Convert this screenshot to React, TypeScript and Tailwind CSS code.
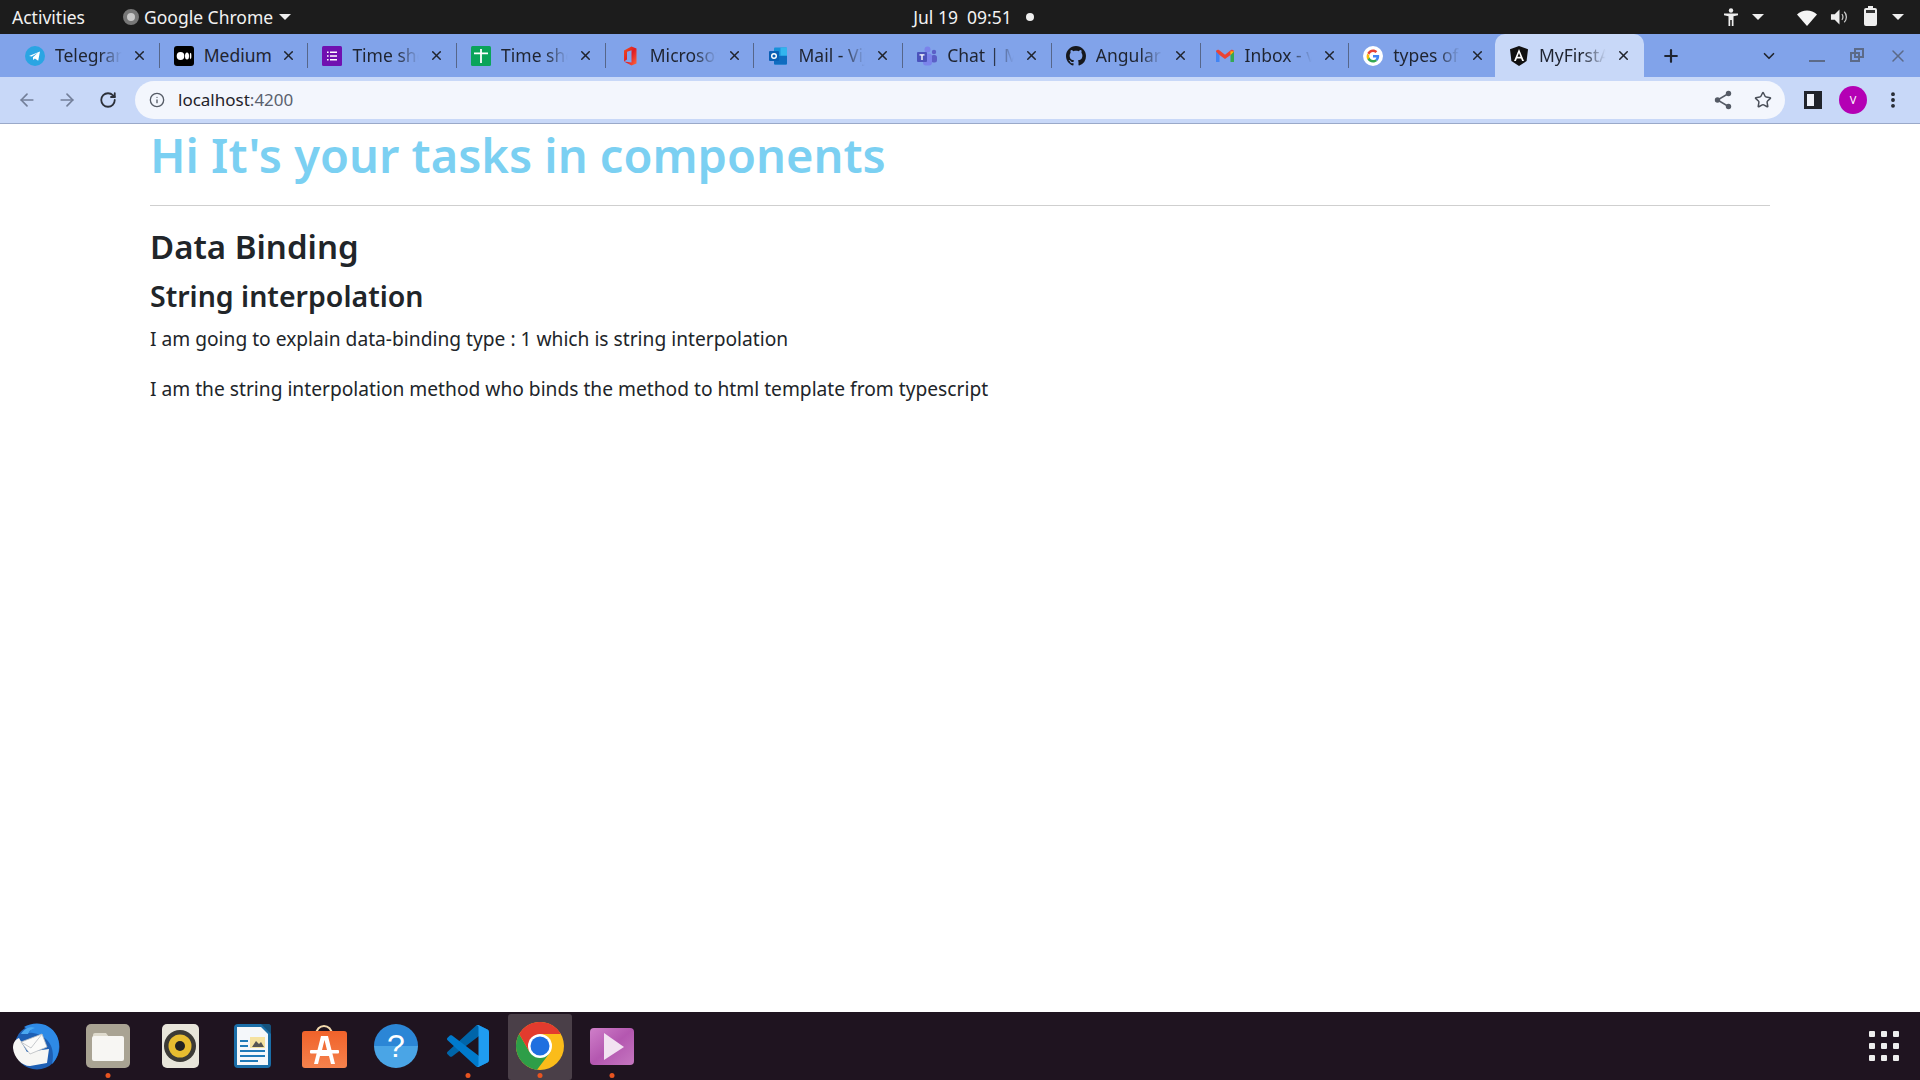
import React from 'react';
import { ArrowLeft, ArrowRight, RotateCw, Info, Star, Plus, X, ChevronDown, EllipsisVertical } from 'lucide-react';

const sans = "font-['Noto_Sans','Open_Sans',sans-serif]";

const TelegramIcon = () => (
  <svg viewBox="0 0 20 20" className="w-5 h-5">
    <circle cx="10" cy="10" r="10" fill="#2aa5e3" />
    <path d="M4 10l11-4.400-1.800 9.200-3.300-2.400-1.700 1.700-.3-2.900 5-4.400-6.200 3.700z" fill="#fff" />
  </svg>
);
const MediumIcon = () => (
  <svg viewBox="0 0 20 20" className="w-5 h-5">
    <rect width="20" height="20" rx="3" fill="#000" />
    <ellipse cx="6.500" cy="10" rx="3.800" ry="3.900" fill="#fff" />
    <ellipse cx="13" cy="10" rx="2" ry="3.600" fill="#fff" />
    <ellipse cx="16.600" cy="10" rx=".8" ry="3.200" fill="#fff" />
  </svg>
);
const FormsIcon = () => (
  <svg viewBox="0 0 20 20" className="w-5 h-5">
    <rect width="20" height="20" rx="1.500" fill="#7010b0" />
    <path d="M5 5.500h1.600v1.600H5zM8 5.500h7v1.600H8zM5 9.200h1.600v1.600H5zM8 9.200h7v1.600H8zM5 12.900h1.600v1.600H5zM8 12.900h7v1.600H8z" fill="#fff" />
  </svg>
);
const SheetsIcon = () => (
  <svg viewBox="0 0 20 20" className="w-5 h-5">
    <rect width="20" height="20" rx="1.500" fill="#0aa45a" />
    <path d="M9.100 3h1.800v3.500H17v1.800h-6.100V17H9.100V8.300H3V6.500h6.100z" fill="#fff" />
  </svg>
);
const OfficeIcon = () => (
  <svg viewBox="0 0 20 20" className="w-5 h-5">
    <defs>
      <linearGradient id="office" x1="0" y1="0" x2="1" y2="1">
        <stop offset="0" stopColor="#f2541b" />
        <stop offset="0.5" stopColor="#e01c24" />
        <stop offset="1" stopColor="#ff6a3c" />
      </linearGradient>
    </defs>
    <path d="M4 4.500L11.500 0.500 16.500 2.500V17.500L11.500 19.500 4 15.500 11.500 16.500V4.200L7 5.800V13.500L4 15.500z" fill="url(#office)" />
  </svg>
);
const OutlookIcon = () => (
  <svg viewBox="0 0 20 20" className="w-5 h-5">
    <rect x="6" y="1.500" width="13" height="17" rx="1" fill="#1690d8" />
    <rect x="12.500" y="1.500" width="6.500" height="8" fill="#32b5ee" />
    <path d="M6 10l13 0v7.500a1 1 0 0 1-1 1H7a1 1 0 0 1-1-1z" fill="#0f6cc0" />
    <rect x="1" y="5" width="10" height="10" rx="1" fill="#0a5fb4" />
    <circle cx="6" cy="10" r="2.300" fill="none" stroke="#fff" strokeWidth="1.400" />
  </svg>
);
const TeamsIcon = () => (
  <svg viewBox="0 0 20 20" className="w-5 h-5">
    <circle cx="17" cy="6" r="2.200" fill="#5b5fc7" />
    <rect x="14" y="9" width="6" height="7.500" rx="2.500" fill="#5b5fc7" />
    <circle cx="10.500" cy="3.500" r="3" fill="#7b83eb" />
    <rect x="6" y="7.500" width="9" height="12" rx="3" fill="#7b83eb" />
    <rect x="0" y="6" width="10" height="10" rx="1" fill="#4b53bc" />
    <path d="M2.500 8.300h5v1.300H5.700v4.300H4.300V9.600H2.500z" fill="#fff" />
  </svg>
);
const GithubIcon = () => (
  <svg viewBox="0 0 16 16" className="w-5 h-5" fill="#16181d">
    <path d="M8 0C3.580 0 0 3.580 0 8c0 3.540 2.290 6.530 5.470 7.590.4.070.55-.17.55-.38 0-.19-.01-.82-.01-1.490-2.010.37-2.530-.49-2.690-.94-.09-.23-.48-.94-.82-1.130-.28-.15-.68-.52-.01-.53.63-.01 1.080.58 1.230.82.720 1.210 1.870.87 2.330.66.070-.52.280-.87.510-1.070-1.780-.2-3.640-.89-3.640-3.950 0-.87.310-1.590.820-2.150-.08-.2-.36-1.020.08-2.120 0 0 .67-.21 2.200.82.640-.18 1.320-.27 2-.27s1.360.09 2 .27c1.530-1.040 2.200-.82 2.200-.82.440 1.100.16 1.920.08 2.120.51.560.82 1.270.82 2.150 0 3.070-1.870 3.750-3.650 3.950.29.250.54.730.54 1.480 0 1.070-.01 1.930-.01 2.200 0 .21.150.46.550.38A8.010 8.010 0 0 0 16 8c0-4.420-3.580-8-8-8z" />
  </svg>
);
const GmailIcon = () => (
  <svg viewBox="0 0 20 20" className="w-5 h-5">
    <path d="M1 5v11h3.500V8.500z" fill="#4285f4" />
    <path d="M19 5v11h-3.500V8.500z" fill="#34a853" />
    <path d="M1 5.500c0-1.500 1.800-2.400 3-1.400l6 4.600 6-4.600c1.200-1 3-.1 3 1.400L15.500 9 10 13 4.500 9z" fill="#ea4335" />
    <path d="M15.500 5.300L19 5.500 15.500 9z" fill="#fbbc04" />
  </svg>
);
const GoogleIcon = () => (
  <svg viewBox="0 0 20 20" className="w-5 h-5">
    <circle cx="10" cy="10" r="10" fill="#fff" />
    <path d="M16.200 10.200c0-.5 0-.9-.1-1.300H10v2.500h3.500c-.1.800-.6 1.500-1.300 2l2 1.600c1.200-1.100 2-2.800 2-4.800z" fill="#4285f4" />
    <path d="M10 16.500c1.700 0 3.200-.6 4.200-1.500l-2-1.600c-.6.400-1.300.6-2.200.6-1.700 0-3.100-1.100-3.600-2.700l-2.100 1.600c1 2.100 3.200 3.600 5.700 3.600z" fill="#34a853" />
    <path d="M6.400 11.800c-.3-.8-.3-1.700 0-2.500L4.300 7.600c-.9 1.800-.9 4 0 5.800z" fill="#fbbc05" />
    <path d="M10 6c.9 0 1.800.3 2.500 1l1.800-1.800C13.100 4.100 11.600 3.500 10 3.500c-2.500 0-4.700 1.500-5.700 3.600l2.100 1.700C6.900 7.200 8.300 6 10 6z" fill="#ea4335" />
  </svg>
);
const AngularIcon = () => (
  <svg viewBox="0 0 20 20" className="w-5 h-5">
    <path d="M10 0l9 3.200-1.400 11.900L10 20l-7.600-4.900L1 3.200z" fill="#111" />
    <path d="M10 3L5 15h1.900l1-2.600h4.200l1 2.600H15zM8.500 10.800L10 7l1.500 3.800z" fill="#fff" />
  </svg>
);

const TABS = [
  { title: 'Telegram', icon: <TelegramIcon /> },
  { title: 'Medium', icon: <MediumIcon />, fits: true },
  { title: 'Time sheet', icon: <FormsIcon /> },
  { title: 'Time sheet', icon: <SheetsIcon /> },
  { title: 'Microsoft', icon: <OfficeIcon /> },
  { title: 'Mail - Vijay', icon: <OutlookIcon /> },
  { title: 'Chat | Microsoft', icon: <TeamsIcon /> },
  { title: 'Angular', icon: <GithubIcon /> },
  { title: 'Inbox - vijay', icon: <GmailIcon /> },
  { title: 'types of', icon: <GoogleIcon /> },
];

function Tab({ title, icon, active, last, fits }: { title: string; icon: React.ReactNode; active?: boolean; last?: boolean; fits?: boolean }) {
  return (
    <div className={`relative flex items-center w-[148.7px] h-full shrink-0 ${active ? 'pl-[14px] bg-[#c8d8f8] rounded-t-[10px]' : 'pl-[17px]'}`}>
      <span className="w-5 h-5 shrink-0">{icon}</span>
      <span className={`ml-[10px] w-[68px] overflow-hidden whitespace-nowrap text-[17.5px] text-[#1f2430] ${fits ? '' : '[mask-image:linear-gradient(to_right,#000_65%,transparent_98%)]'}`}>
        {title}
      </span>
      <X size={15} strokeWidth={2.4} className="ml-[9px] shrink-0 text-[#20242c]" />
      {!active && !last && <span className="absolute -right-[3px] top-[9px] h-[25px] w-px bg-[#56668a]" />}
    </div>
  );
}

const Caret = ({ className }: { className: string }) => (
  <span className={`w-0 h-0 border-x-[6px] border-x-transparent border-t-[6px] border-t-[#eee] ${className}`} />
);

function TopBar() {
  return (
    <div className="flex items-center h-[34px] shrink-0 bg-[#1c1c1c] text-[#f2f2f2] text-[17.5px]">
      <span className="ml-3 w-[77px]">Activities</span>
      <span className="ml-[34px] w-4 h-4 rounded-full bg-[#c8c8c8] border-[4px] border-[#777]" />
      <span className="ml-[5px] w-[131px] whitespace-nowrap">Google Chrome</span>
      <Caret className="ml-[4px]" />
      <div className="flex-1 flex justify-center pr-[67px]">
        <span className="flex items-center">
          Jul 19&nbsp; 09:51
          <span className="ml-[14px] w-2 h-2 rounded-full bg-[#eee]" />
        </span>
      </div>
      <div className="flex items-center pr-[16px]">
        <svg viewBox="0 0 16 18" className="w-4 h-[18px]" fill="#eee">
          <circle cx="8" cy="2.500" r="2.200" />
          <path d="M1 5.500h14v1.800l-4.500 1V18H8.800v-6H7.200v6H5.500V8.300L1 7.300z" />
        </svg>
        <Caret className="ml-[13px]" />
        <svg viewBox="0 0 20 18" className="ml-[33px] w-5 h-[18px]" fill="#f5f5f5">
          <path d="M0 6.500C5.500 1 14.500 1 20 6.500L10 18z" />
        </svg>
        <svg viewBox="0 0 20 18" className="ml-[13px] w-[19px] h-[18px]" fill="none">
          <path d="M1 6h4l5-5v16l-5-5H1z" fill="#eee" />
          <path d="M12.500 6c1.500 1.500 1.500 4.500 0 6M15 3.500c3 3 3 8 0 11" stroke="#ccc" strokeWidth="1.300" />
        </svg>
        <span className="ml-[15px] relative w-[13px] h-[18px] border-2 border-[#eee] rounded-[2px] bg-[#eee]">
          <span className="absolute -top-[4px] left-[2px] w-[5px] h-[2px] bg-[#eee]" />
          <span className="absolute left-0 right-0 top-0 h-[3px] bg-[#333]" />
        </span>
        <Caret className="ml-[15px]" />
      </div>
    </div>
  );
}

function TabStrip() {
  return (
    <div className="flex items-stretch h-[43px] shrink-0 bg-[#81a3ea] pl-2">
      {TABS.map((t, i) => (
        <Tab key={i} title={t.title} icon={t.icon} fits={t.fits} last={i === TABS.length - 1} />
      ))}
      <Tab title="MyFirstApp" icon={<AngularIcon />} active />
      <Plus size={20} strokeWidth={2.6} className="ml-[17px] self-center text-[#1f2430]" />
      <ChevronDown size={18} strokeWidth={2.2} className="ml-[79px] self-center text-[#20242c]" />
      <span className="ml-[31px] mt-[26px] self-start w-[16px] h-[2px] bg-[#5c6a88]" />
      <span className="ml-[25px] self-center relative w-[14px] h-[14px] -mt-[2px]">
        <span className="absolute right-0 top-0 w-[10px] h-[10px] border-2 border-[#5c6a88]" />
        <span className="absolute left-0 bottom-0 w-[10px] h-[10px] border-2 border-[#5c6a88]" />
      </span>
      <X size={20} strokeWidth={1.800} className="ml-[24px] self-center text-[#5c6a88]" />
    </div>
  );
}

function Toolbar() {
  return (
    <div className="flex items-center h-[47px] shrink-0 bg-[#c8d8f8] border-b border-[#9aa9c9]">
      <ArrowLeft size={20} strokeWidth={2} className="ml-[17px] text-[#737f99]" />
      <ArrowRight size={20} strokeWidth={2} className="ml-[20px] text-[#737f99]" />
      <RotateCw size={18} strokeWidth={2.4} className="ml-[22px] text-[#2b2f38]" />
      <div className="ml-[18px] flex items-center w-[1650px] h-[38px] rounded-full bg-[#f3f6fd]">
        <Info size={16} strokeWidth={2} className="ml-[14px] text-[#555b66]" />
        <span className="ml-[13px] text-[17px] text-[#1f2229]">
          localhost<span className="text-[#5a616e]">:4200</span>
        </span>
        <svg viewBox="0 0 18 20" className="ml-auto w-[18px] h-5 text-[#555b66]" fill="currentColor">
          <circle cx="14.500" cy="3.500" r="2.700" />
          <circle cx="3.500" cy="10" r="2.700" />
          <circle cx="14.500" cy="16.500" r="2.700" />
          <path d="M14.500 3.500L3.500 10l11 6.500" fill="none" stroke="currentColor" strokeWidth="1.500" />
        </svg>
        <Star size={18} strokeWidth={2} className="ml-[22px] mr-[13px] text-[#4a4f59]" />
      </div>
      <span className="ml-[19px] w-[18px] h-[18px] border-[3px] border-[#20242c] border-r-[8px] bg-[#eef2fb]" />
      <span className="ml-[17px] flex items-center justify-center w-7 h-7 rounded-full bg-[#b400b4] text-white text-[11px]">V</span>
      <EllipsisVertical size={20} strokeWidth={2.6} className="ml-[16px] text-[#20242c]" />
    </div>
  );
}

function DockSlot({ children, dot, active }: { children: React.ReactNode; dot?: boolean; active?: boolean }) {
  return (
    <div className="relative flex items-center justify-center w-[72px] h-[68px]">
      {active && <span className="absolute left-[4px] right-[4px] top-[2px] bottom-0 bg-[#4a3f48] rounded-[3px]" />}
      <span className="relative flex items-center justify-center">{children}</span>
      {dot && <span className="absolute bottom-[2px] left-1/2 -translate-x-1/2 w-[5px] h-[5px] rounded-full bg-[#e95420]" />}
    </div>
  );
}

function Dock() {
  return (
    <div className="flex items-center h-[68px] shrink-0 bg-[#1f1420]">
      <div className="flex items-center">
        <DockSlot>
          <svg viewBox="0 0 48 48" className="w-12 h-12">
            <circle cx="25" cy="25" r="22.500" fill="#1d5fb4" />
            <path d="M12 5C22-1 38 0 45 14c4 9 2 21-5 28 2-9 1-18-5-24C29 12 22 10 13 11l6-2z" fill="#2e8ae6" />
            <path d="M9 12c3-5 9-8 14-6-4 1-6 3-7 6z" fill="#4aa8f0" />
            <path d="M1 26c0-6 3-9 6-10l8 14 22-3-2 14-17 3C10 44 2 36 1 26z" fill="#f6f6f4" />
            <path d="M9 20l21-8 5 13-17 7z" fill="#fbfbfa" stroke="#b9bcc0" strokeWidth=".8" />
            <path d="M9 20l10 6 11-14" fill="none" stroke="#b9bcc0" strokeWidth=".8" />
          </svg>
        </DockSlot>
        <DockSlot dot>
          <div className="flex items-center justify-center w-[44px] h-[44px] rounded-[5px] bg-[#a9a393]">
            <svg viewBox="0 0 32 30" className="w-8 h-[30px]">
              <path d="M1 4a2 2 0 0 1 2-2h11l3 4H1z" fill="#dfdbce" />
              <rect x="0" y="5" width="32" height="25" rx="2" fill="#f7f6f3" />
            </svg>
          </div>
        </DockSlot>
        <DockSlot>
          <div className="flex items-center justify-center w-[37px] h-[44px] rounded-[5px] bg-[#e8e5da]">
            <svg viewBox="0 0 32 32" className="w-8 h-8">
              <circle cx="16" cy="16" r="16" fill="#3c3a36" />
              <circle cx="16" cy="16" r="11.500" fill="#e8bd30" />
              <circle cx="16" cy="16" r="5" fill="#222" />
            </svg>
          </div>
        </DockSlot>
        <DockSlot>
          <svg viewBox="0 0 37 44" className="w-[37px] h-[44px]">
            <rect width="37" height="44" rx="4" fill="#1a6ea8" />
            <path d="M3 3h24l7 7v31H3z" fill="#f4f7fa" />
            <path d="M27 0h7a3 3 0 0 1 3 3v7z" fill="#14527d" />
            <path d="M6 16h8v2H6zM6 21h8v2H6zM6 26h25v2H6zM6 31h25v2H6zM6 36h18v2H6z" fill="#1f7ab8" />
            <rect x="16" y="13" width="15" height="11" fill="#f5e2a0" />
            <path d="M18 23l4-6 3 3 2-2 3 5z" fill="#555" />
          </svg>
        </DockSlot>
        <DockSlot>
          <svg viewBox="0 0 45 43" className="w-[45px] h-[43px]">
            <defs>
              <linearGradient id="bag" x1="0" y1="0" x2="0" y2="1">
                <stop offset="0" stopColor="#f0622a" />
                <stop offset="1" stopColor="#f5824d" />
              </linearGradient>
            </defs>
            <path d="M14 10c0-12 16-12 16 0" fill="none" stroke="#f3d9ad" strokeWidth="2" />
            <rect y="6" width="45" height="37" rx="3" fill="url(#bag)" />
            <path d="M19 11h7l7 28h-4l-2-8h-9l-2 8h-4zM20 25h5l-2.500-10z" fill="#fff" fillRule="evenodd" />
            <rect x="8" y="25" width="29" height="3.500" rx="1" fill="#fff" />
          </svg>
        </DockSlot>
        <DockSlot>
          <div className="flex items-center justify-center w-[44px] h-[44px] rounded-full bg-[linear-gradient(to_bottom,#2b86d6_50%,#4aa5e6_50%)]">
            <span className="text-white text-[32px] leading-none font-['Liberation_Sans',sans-serif]">?</span>
          </div>
        </DockSlot>
        <DockSlot dot>
          <svg viewBox="0 0 100 100" className="w-[42px] h-[42px]">
            <path d="M96.4614 10.7962L75.8569 0.875542C73.4719 -0.272773 70.6217 0.211611 68.75 2.08333L1.29858 63.5832C-0.515693 65.2373 -0.513607 68.0937 1.30308 69.7452L6.81272 74.754C8.29793 76.1042 10.5347 76.2036 12.1338 74.9905L93.3609 13.3699C96.086 11.3026 100 13.2462 100 16.6667V16.4275C100 14.0265 98.6246 11.8378 96.4614 10.7962Z" fill="#0065A9" />
            <path d="M96.4614 89.2038L75.8569 99.1245C73.4719 100.273 70.6217 99.7884 68.75 97.9167L1.29858 36.4168C-0.515693 34.7627 -0.513607 31.9063 1.30308 30.2548L6.81272 25.246C8.29793 23.8958 10.5347 23.7964 12.1338 25.0095L93.3609 86.6301C96.086 88.6974 100 86.7538 100 83.3333V83.5725C100 85.9735 98.6246 88.1622 96.4614 89.2038Z" fill="#007ACC" />
            <path d="M75.8578 99.1263C73.4721 100.274 70.6219 99.7885 68.75 97.9166C71.0564 100.223 75 98.5895 75 95.3278V4.67213C75 1.41039 71.0564 -0.223106 68.75 2.08329C70.6219 0.211402 73.4721 -0.273666 75.8578 0.873633L96.4587 10.7807C98.6234 11.8217 100 14.0112 100 16.4132V83.5871C100 85.9891 98.6234 88.1786 96.4586 89.2196L75.8578 99.1263Z" fill="#1F9CF0" />
          </svg>
        </DockSlot>
        <DockSlot dot active>
          <svg viewBox="0 0 48 48" className="w-12 h-12">
            <circle cx="24" cy="24" r="24" fill="#fbbc1a" />
            <path d="M3.200 12A24 24 0 0 0 21 47.800L34.400 30H13.600z" fill="#2e9e48" />
            <path d="M3.200 12A24 24 0 0 1 44.800 12H24L13.600 30z" fill="#e33b2e" />
            <circle cx="24" cy="24" r="12" fill="#fff" />
            <circle cx="24" cy="24" r="9.500" fill="#1f6fe0" />
          </svg>
        </DockSlot>
        <DockSlot dot>
          <svg viewBox="0 0 44 37" className="w-[44px] h-[37px]">
            <defs>
              <linearGradient id="player" x1="0" y1="0" x2="1" y2="1">
                <stop offset="0" stopColor="#cf7fc9" />
                <stop offset="0.5" stopColor="#b457b0" />
                <stop offset="1" stopColor="#c577c0" />
              </linearGradient>
            </defs>
            <rect width="44" height="37" rx="4" fill="url(#player)" />
            <path d="M14 5l20 14-20 13z" fill="#f2e2f1" />
          </svg>
        </DockSlot>
      </div>
      <div className="ml-auto mr-[21px] grid grid-cols-3 gap-[6px]">
        {[0, 1, 2, 3, 4, 5, 6, 7, 8].map((n) => (
          <span key={n} className="w-[6px] h-[6px] rounded-[1px] bg-[#eeeeee]" />
        ))}
      </div>
    </div>
  );
}

export default function App() {
  return (
    <div className={`flex flex-col w-[1920px] h-[1080px] overflow-hidden bg-white ${sans}`}>
      <TopBar />
      <TabStrip />
      <Toolbar />
      <main className="flex-1 px-[150px] text-[#212529]">
        <h1 className="text-[47px] leading-[62px] font-semibold text-[#7bd0f2]">Hi It's your tasks in components</h1>
        <hr className="mt-[19px] border-[#cfcfcf]" />
        <h2 className="mt-[19px] text-[33px] leading-[44px] font-semibold">Data Binding</h2>
        <h3 className="mt-[9px] text-[28.5px] leading-[36px] font-semibold">String interpolation</h3>
        <p className="mt-[10px] text-[19.2px] leading-[30px]">I am going to explain data-binding type : 1 which is string interpolation</p>
        <p className="mt-[20px] text-[19.2px] leading-[30px]">I am the string interpolation method who binds the method to html template from typescript</p>
      </main>
      <Dock />
    </div>
  );
}
